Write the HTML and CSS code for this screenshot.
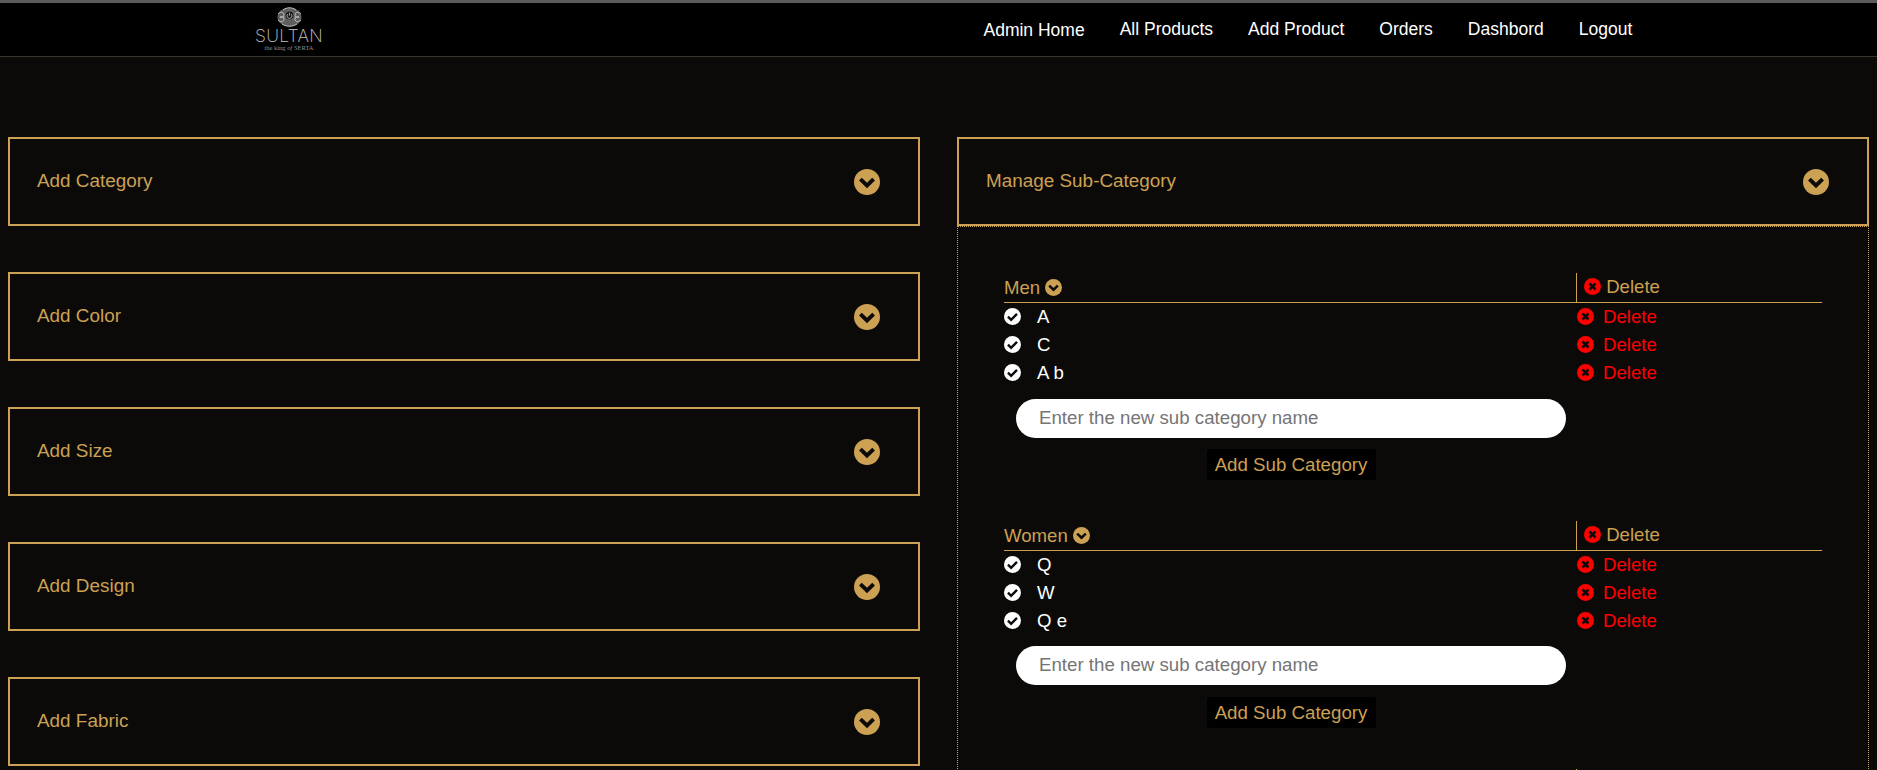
FILE: index.html
```html
<!DOCTYPE html>
<html lang="en">
<head>
<meta charset="UTF-8">
<meta name="viewport" content="width=device-width, initial-scale=1.0">
<title>Sultan Admin</title>
<link rel="stylesheet" href="styles.css">
</head>
<body>
  <svg class="icon-defs" aria-hidden="true">
    <symbol id="i-down" viewBox="0 0 24 24">
      <circle cx="12" cy="12" r="12" fill="currentColor"/>
      <path d="M5.9 9.4 12 15.2 18.1 9.4" fill="none" stroke="#0b0a09" stroke-width="3.6"/>
    </symbol>
    <symbol id="i-check" viewBox="0 0 24 24">
      <circle cx="12" cy="12" r="12" fill="currentColor"/>
      <path d="M5.6 12.2 10 16.6 18.4 8.2" fill="none" stroke="#0b0a09" stroke-width="3.4"/>
    </symbol>
    <symbol id="i-times" viewBox="0 0 24 24">
      <circle cx="12" cy="12" r="12" fill="currentColor"/>
      <path d="M7.8 7.8 16.2 16.2M16.2 7.8 7.8 16.2" fill="none" stroke="#0b0a09" stroke-width="3.6"/>
    </symbol>
  </svg>

  <nav class="navbar">
    <a class="logo" href="#">
      <svg class="logo-mark" viewBox="0 0 25 20" aria-hidden="true">
        <ellipse cx="12.5" cy="10" rx="12" ry="9.5" fill="#5e5e5e"/>
        <path d="M1 7c3-3 6-2 6 1s-3 3-4 1M1 13c3 3 6 2 6-1s-3-3-4-1M24 7c-3-3-6-2-6 1s3 3 4 1M24 13c-3 3-6 2-6-1s3-3 4-1M5 17c5 3 10 3 15 0M6 3c4-3 9-3 13 0" fill="none" stroke="#c8c8c8" stroke-width="0.9"/>
        <circle cx="12.5" cy="8.5" r="4.6" fill="#1c1c1c" stroke="#8c8c8c" stroke-width="0.6"/>
        <path d="M12.5 5.8v2.8M10.7 7.2a2.5 2.5 0 1 0 3.6 0" fill="none" stroke="#c4c4c4" stroke-width="0.8"/>
      </svg>
      <span class="logo-name">SULTAN</span>
      <span class="logo-sub">the king <i>of</i> SERTA</span>
    </a>
    <ul class="nav-links">
      <li class="nav-home"><a href="#">Admin Home</a></li>
      <li><a href="#">All Products</a></li>
      <li><a href="#">Add Product</a></li>
      <li><a href="#">Orders</a></li>
      <li><a href="#">Dashbord</a></li>
      <li><a href="#">Logout</a></li>
    </ul>
  </nav>

  <main class="content">
    <section class="col">
      <div class="panel-head"><span>Add Category</span><svg class="icon-lg"><use href="#i-down"/></svg></div>
      <div class="panel-head"><span>Add Color</span><svg class="icon-lg"><use href="#i-down"/></svg></div>
      <div class="panel-head"><span>Add Size</span><svg class="icon-lg"><use href="#i-down"/></svg></div>
      <div class="panel-head"><span>Add Design</span><svg class="icon-lg"><use href="#i-down"/></svg></div>
      <div class="panel-head"><span>Add Fabric</span><svg class="icon-lg"><use href="#i-down"/></svg></div>
    </section>

    <section class="col-right">
      <div class="panel-head"><span>Manage Sub-Category</span><svg class="icon-lg"><use href="#i-down"/></svg></div>
      <div class="panel-body">

        <div class="group">
          <div class="group-head">
            <div class="group-name">Men <svg class="icon"><use href="#i-down"/></svg></div>
            <div class="group-del"><svg class="icon red"><use href="#i-times"/></svg> Delete</div>
          </div>
          <div class="sub-row">
            <div class="sub-name"><svg class="icon"><use href="#i-check"/></svg><span>A</span></div>
            <div class="sub-del"><svg class="icon"><use href="#i-times"/></svg><span>Delete</span></div>
          </div>
          <div class="sub-row">
            <div class="sub-name"><svg class="icon"><use href="#i-check"/></svg><span>C</span></div>
            <div class="sub-del"><svg class="icon"><use href="#i-times"/></svg><span>Delete</span></div>
          </div>
          <div class="sub-row">
            <div class="sub-name"><svg class="icon"><use href="#i-check"/></svg><span>A b</span></div>
            <div class="sub-del"><svg class="icon"><use href="#i-times"/></svg><span>Delete</span></div>
          </div>
          <form class="sub-form">
            <input type="text" placeholder="Enter the new sub category name">
            <button type="button">Add Sub Category</button>
          </form>
        </div>

        <div class="group">
          <div class="group-head">
            <div class="group-name">Women <svg class="icon"><use href="#i-down"/></svg></div>
            <div class="group-del"><svg class="icon red"><use href="#i-times"/></svg> Delete</div>
          </div>
          <div class="sub-row">
            <div class="sub-name"><svg class="icon"><use href="#i-check"/></svg><span>Q</span></div>
            <div class="sub-del"><svg class="icon"><use href="#i-times"/></svg><span>Delete</span></div>
          </div>
          <div class="sub-row">
            <div class="sub-name"><svg class="icon"><use href="#i-check"/></svg><span>W</span></div>
            <div class="sub-del"><svg class="icon"><use href="#i-times"/></svg><span>Delete</span></div>
          </div>
          <div class="sub-row">
            <div class="sub-name"><svg class="icon"><use href="#i-check"/></svg><span>Q e</span></div>
            <div class="sub-del"><svg class="icon"><use href="#i-times"/></svg><span>Delete</span></div>
          </div>
          <form class="sub-form">
            <input type="text" placeholder="Enter the new sub category name">
            <button type="button">Add Sub Category</button>
          </form>
        </div>

        <div class="group">
          <div class="group-head">
            <div class="group-name"></div>
            <div class="group-del"></div>
          </div>
        </div>

      </div>
    </section>
  </main>
</body>
</html>
```

FILE: styles.css
```css
html, body {
  height: 100%;
  overflow: hidden; /* screenshot shows no scrollbar */
}

body {
  margin: 0;
  background-color: #0b0a09;
  color: #cca154;
  font-family: "Liberation Sans", Arial, sans-serif;
  font-size: 18.6px;
}

a {
  color: inherit;
  text-decoration: none;
}

.icon-defs {
  display: none;
}

/* top navigation */
.navbar {
  display: flex;
  align-items: center;
  height: 53px;
  padding-left: 255px;
  background-color: #000;
  border-top: 3px solid #5c5c5c;
  border-bottom: 1px solid #3a342c;
}

.logo {
  display: flex;
  flex-direction: column;
  align-items: center;
  width: 68px;
  color: #c4c4c4;
}

.logo-mark {
  width: 25px;
  height: 20px;
}

.logo-name {
  font-family: "Inter", "Lato", sans-serif;
  font-weight: 200;
  font-size: 17.5px;
  line-height: 17px;
  letter-spacing: 0.3px;
}

.logo-sub {
  font-family: "Liberation Serif", serif;
  font-size: 6.5px;
  line-height: 8px;
  color: #8b8b8b;
  white-space: nowrap;
}

.nav-links {
  display: flex;
  align-items: center;
  gap: 35px;
  margin: 0 0 0 660.5px;
  padding: 0;
  list-style: none;
  color: #fff;
  font-size: 17.5px;
}

.nav-home {
  margin-top: 2px;
}

/* two columns */
.content {
  display: grid;
  grid-template-columns: 912px 912px;
  column-gap: 37px;
  padding: 80px 8px 0;
}

.col .panel-head {
  margin-bottom: 46px;
}

.panel-head {
  display: flex;
  align-items: center;
  justify-content: space-between;
  box-sizing: border-box;
  height: 89px;
  padding: 0 38px 0 27px;
  border: 2px solid #cca154;
  font-size: 18.9px;
}

.panel-head span {
  padding-bottom: 2px;
}

.icon-lg {
  width: 26px;
  height: 26px;
  margin-top: 1px;
  color: #cca154;
}

.icon {
  width: 17px;
  height: 17px;
  vertical-align: -2px;
}

.panel-body {
  padding: 46px 46px 0;
  border: 1px dotted #cca154;
  border-bottom: none;
}

/* one category block */
.group {
  margin-bottom: 41px;
}

.group-head {
  display: flex;
  height: 29px;
  border-bottom: 1px solid #cca154;
}

.group-name {
  box-sizing: border-box;
  width: 572px;
  padding-top: 4px;
}

.group-del {
  flex: 1;
  padding: 3px 0 0 7px;
  border-left: 1px solid #cca154;
}

.red {
  color: #f00;
}

.sub-row {
  display: flex;
  align-items: center;
  box-sizing: border-box;
  height: 28px;
  padding-bottom: 1px;
}

.sub-row span {
  padding-top: 1px;
}

.sub-name {
  display: flex;
  align-items: center;
  gap: 16px;
  width: 573px;
  color: #fff;
}

.sub-del {
  display: flex;
  align-items: center;
  gap: 9px;
  color: #f00;
}

.sub-form {
  display: flex;
  flex-direction: column;
  align-items: center;
  width: 574px;
  margin-top: 11.6px;
}

.sub-form input {
  box-sizing: border-box;
  width: 550px;
  height: 39px;
  padding: 0 23px 1px;
  border: none;
  border-radius: 20px;
  background-color: #fff;
  font-family: inherit;
  font-size: 18.7px;
  outline: none;
}

.sub-form input::placeholder {
  color: #757575;
}

.sub-form button {
  box-sizing: border-box;
  width: 169px;
  height: 31px;
  margin-top: 11.2px;
  padding: 1px 0 0;
  border: none;
  border-radius: 3px;
  background-color: #000;
  color: #cca154;
  font-family: inherit;
  font-size: 18.7px;
}
```
